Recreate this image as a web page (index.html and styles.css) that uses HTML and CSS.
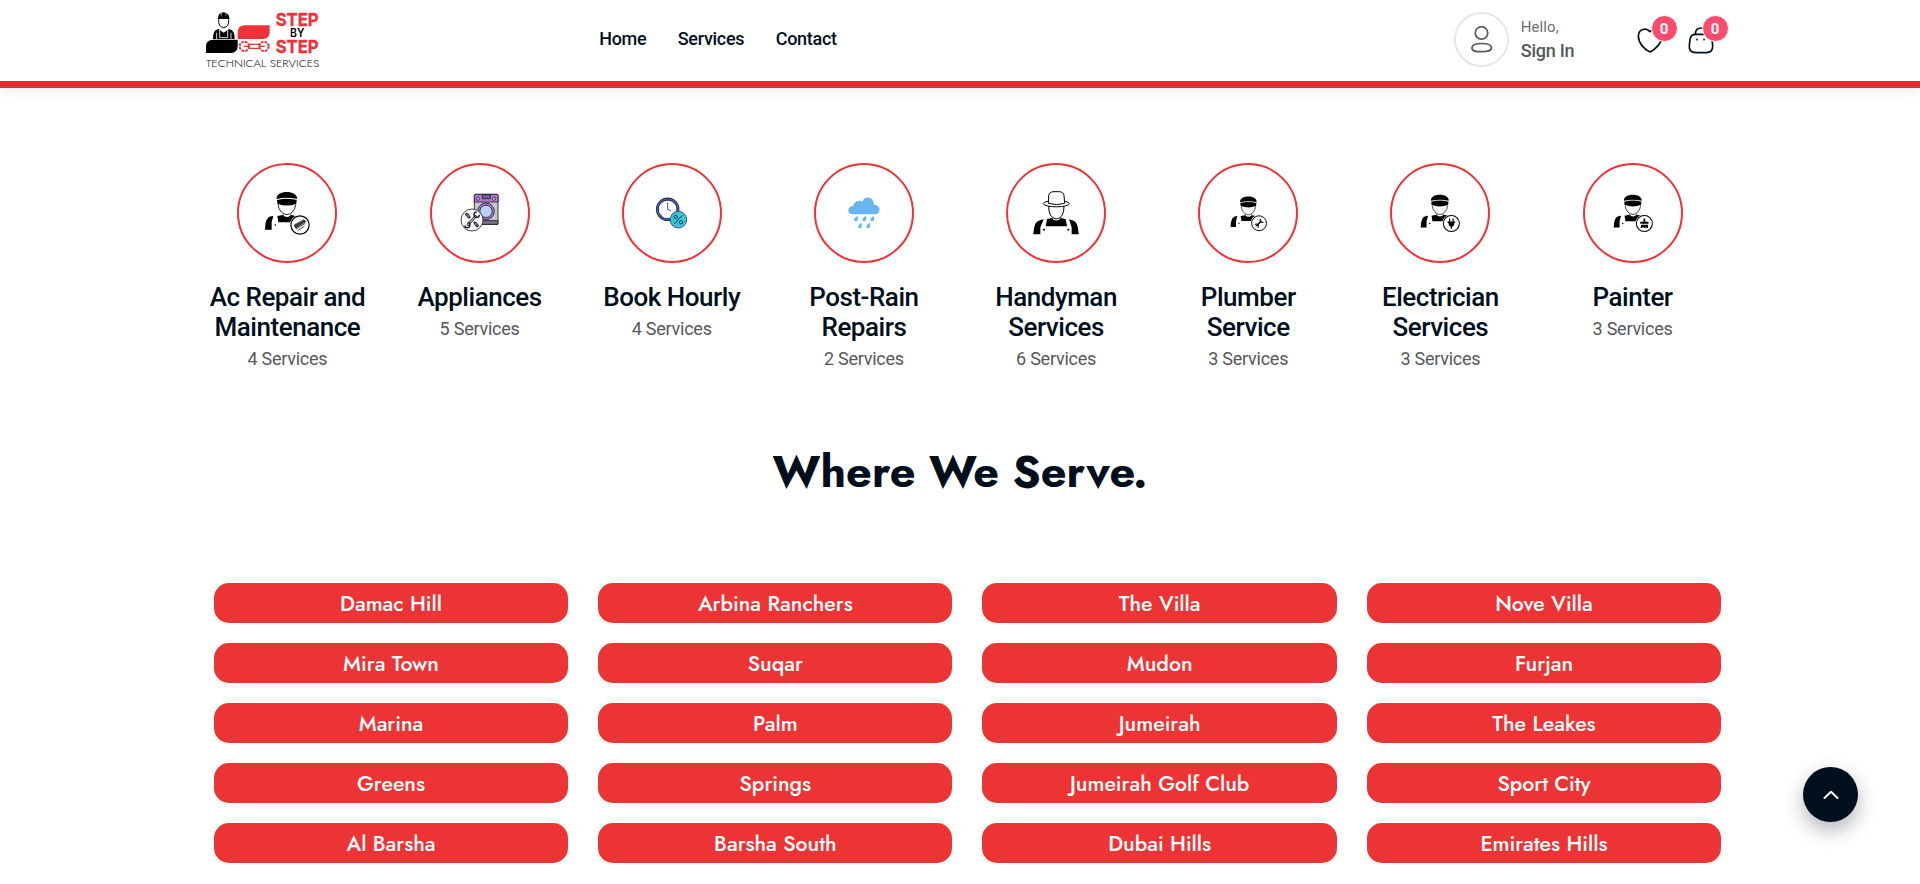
FILE: index.html
```html
<!DOCTYPE html>
<html lang="en">
<head>
<meta charset="utf-8">
<title>Step By Step Technical Services</title>
<link rel="stylesheet" href="styles.css">
</head>
<body>
<svg class="defs" aria-hidden="true">
  <symbol id="worker" viewBox="-72 -72 144 144">
    <path d="M-31-42C-35-70 33-70 30-42Q0-49-31-42Z"/>
    <path d="M-30-39Q0-46 29-39L28-28Q0-17-29-28Z"/>
    <path d="M-27-26Q-25-11-17-3Q-8 5 0 5Q8 5 16-3Q25-11 26-26" fill="none" stroke="#000" stroke-width="2.500"/>
    <path d="M-11 2V10M11 2V10" stroke="#000" stroke-width="1.500"/>
    <path d="M-29 9L-13 6Q0 18 13 6L40 12L24 28H-26Z"/>
    <path d="M-66 50Q-66 12-48 10L-41 9L-46 28V50Z"/>
    <circle cx="-35" cy="36" r="2.500"/>
    <circle cx="39" cy="36" r="31" fill="#fff"/>
    <circle cx="39" cy="36" r="27.500" fill="#fff" stroke="#000" stroke-width="3.500"/>
  </symbol>
</svg>

<header class="header">
  <div class="container header-row">
    <a class="logo">
      <svg viewBox="48 33 342 171" width="114" height="57">
        <path d="M84 55Q84 38 101 37Q117 38 118 55L121 57H81Z"/>
        <path d="M94 47V38M108 47V38" stroke="#fff" stroke-width="2"/>
        <path d="M86 58Q84 81 101 83Q118 81 116 58" fill="#fff" stroke="#000" stroke-width="3"/>
        <path d="M69 117Q68 90 85 87L101 98L117 87Q135 90 134 117Z"/>
        <path d="M89 88V113H113V88M80 98V117M123 98V117" fill="none" stroke="#fff" stroke-width="2.500"/>
        <path d="M48 159V140Q48 119 70 119H143V138Q143 159 122 159Z"/>
        <path d="M143 117V98Q143 76 165 76H239V97Q239 117 218 117Z" fill="#ed323a"/>
        <g fill="none" stroke="#e8353b" stroke-width="4">
          <circle cx="163" cy="139" r="14" stroke-width="6" stroke-dasharray="8 3"/>
          <circle cx="222" cy="139" r="14" stroke-width="6" stroke-dasharray="8 3"/>
          <path d="M161 139H179M206 139H224M178 133H207M178 145H207"/>
        </g>
        <g font-family="Inter, 'Liberation Sans', sans-serif" font-weight="700">
          <text x="257" y="77" font-size="54" textLength="129" lengthAdjust="spacingAndGlyphs" fill="#ed323a" stroke="#ed323a">STEP</text>
          <text x="300" y="111" font-size="34" font-weight="600" textLength="43" lengthAdjust="spacingAndGlyphs">BY</text>
          <text x="257" y="158" font-size="54" textLength="129" lengthAdjust="spacingAndGlyphs" fill="#ed323a" stroke="#ed323a">STEP</text>
        </g>
        <text x="48" y="200" font-family="Jost, Inter, sans-serif" font-size="34" font-weight="300" textLength="340" lengthAdjust="spacingAndGlyphs" fill="#222">TECHNICAL SERVICES</text>
      </svg>
    </a>
    <nav class="nav">
      <a>Home</a>
      <a>Services</a>
      <a>Contact</a>
    </nav>
    <div class="account">
      <span class="avatar">
        <svg viewBox="91 76 68 82" width="23" height="27" fill="none" stroke="#55585b" stroke-width="5">
          <circle cx="125" cy="97" r="19"/>
          <path d="M96 143C96 131 108 129 125 129S155 131 155 142S143 154 125 154S96 153 96 143Z"/>
        </svg>
      </span>
      <div class="account-text">
        <span class="hello">Hello,</span>
        <span class="signin">Sign In</span>
      </div>
    </div>
    <div class="actions">
      <a class="action">
        <svg viewBox="592 81 78 81" width="26" height="27" fill="none" stroke="#010f1c" stroke-width="5" stroke-linecap="round" stroke-linejoin="round">
          <path d="M631 156C614 148 596 129 596 108C597 87 619 81 631 95C643 81 666 87 667 108C667 129 647 148 631 156Z"/>
        </svg>
        <span class="badge">0</span>
      </a>
      <a class="action">
        <svg viewBox="746 81 78 81" width="26" height="27" fill="none" stroke="#010f1c" stroke-width="5" stroke-linecap="round" stroke-linejoin="round">
          <path d="M769 103H802Q816 103 818 118L820 137Q821 158 801 158H769Q748 158 750 137L752 118Q754 103 769 103ZM768 101Q769 84 786 84T803 101M773 118V119M794 118V119"/>
        </svg>
        <span class="badge">0</span>
      </a>
    </div>
  </div>
</header>

<main class="container">
  <section class="categories">
    <a class="category">
      <span class="ring"><svg width="48" height="48" viewBox="-72 -72 144 144"><use href="#worker" x="-72" y="-72" width="144" height="144"/>
        <path d="M22 36L51 20L56 26L26 45ZM27 48L55 31M32 53L52 40" fill="#222" stroke="#222" stroke-width="2.500"/><path d="M25 36L50 22M27 41L53 26" stroke="#bbb"/></svg></span>
      <h3>Ac Repair and Maintenance</h3>
      <p>4 Services</p>
    </a>
    <a class="category">
      <span class="ring"><svg width="48" height="48" viewBox="768 117 144 144" stroke="#1f1d2b" stroke-width="2.500">
        <rect x="823" y="133" width="71" height="90" rx="3" fill="#c8c7d0"/>
        <path d="M823 156V136Q823 133 826 133H891Q894 133 894 136V156Z" fill="#b579cf"/>
        <path d="M847 134H871V146H847Z" fill="#75608d"/>
        <circle cx="834" cy="146" r="4.500" fill="#ead1f3"/><circle cx="882" cy="146" r="4.500" fill="#ead1f3"/>
        <path d="M840 212H894V223H840Z" fill="#777584"/>
        <circle cx="858" cy="184" r="25" fill="#b07acc"/><circle cx="858" cy="184" r="18.500" fill="#b9d3fa"/>
        <circle cx="816" cy="210" r="33" fill="#f8f8fb"/>
        <g fill="none" stroke-width="9" stroke-linecap="round"><path d="M800 193L807 201M825 219L832 227"/></g>
        <path d="M802 226L829 197" stroke-width="7"/><path d="M803 225L828 198" stroke="#fff" stroke-width="3"/>
        <g fill="none" stroke-width="4"><path d="M830 186A8 8 0 1 0 838 194M803 217A8 8 0 1 1 794 226"/></g>
        <path d="M800 193L807 201M825 219L832 227" stroke="#858397" stroke-width="4"/></svg></span>
      <h3>Appliances</h3>
      <p>5 Services</p>
    </a>
    <a class="category">
      <span class="ring"><svg width="48" height="48" viewBox="174 117 144 144" fill="none">
        <circle cx="233" cy="178" r="31" fill="#fff" stroke="#202b4c" stroke-width="8.500"/>
        <circle cx="233" cy="178" r="31" stroke="#4964ae" stroke-width="3.500"/>
        <path d="M233 157V178L243 182M233 149V153M233 203V207M204 178H208M258 178H262M213 158L215 160M253 158L251 160M213 198L215 196" stroke="#26324d" stroke-width="2.500"/>
        <circle cx="265" cy="209" r="25" fill="#3cc6db" stroke="#233f50" stroke-width="2.500"/>
        <g stroke="#173c49" stroke-width="3"><path d="M253 222L277 196"/><circle cx="257" cy="201" r="5"/><circle cx="273" cy="217" r="5"/></g></svg></span>
      <h3>Book Hourly</h3>
      <p>4 Services</p>
    </a>
    <a class="category">
      <span class="ring"><svg width="48" height="48" viewBox="750 117 144 144" fill="#67b6f0">
        <path d="M789 193C770 193 770 169 790 167C793 153 807 149 817 155C824 136 850 139 852 164C875 165 873 192 855 193Z"/>
        <path id="drop" d="M803 198Q806 214 797 214C789 213 791 203 803 198Z"/><use href="#drop" x="25"/><use href="#drop" x="49"/><use href="#drop" x="12" y="21"/><use href="#drop" x="37" y="21"/></svg></span>
      <h3>Post-Rain Repairs</h3>
      <p>2 Services</p>
    </a>
    <a class="category">
      <span class="ring"><svg width="48" height="48" viewBox="156 117 144 144">
        <g fill="#fff" stroke="#000" stroke-width="3">
          <path d="M206 166Q205 204 229 207Q253 204 252 166"/>
          <path d="M217 203V209M241 203V209" stroke-width="2"/>
          <ellipse cx="229" cy="161" rx="39" ry="9.500"/>
          <path d="M205 160L206 137Q207 125 222 125H236Q251 125 252 137L254 160Q229 168 205 160Z"/>
        </g>
        <path d="M201 208L214 204Q229 219 244 204L257 208L261 229H197Z"/>
        <path d="M160 253Q161 213 180 211L191 208L181 232V253ZM296 253Q295 213 277 211L267 208L275 232V253Z"/>
        <circle cx="192" cy="239" r="3"/><circle cx="265" cy="239" r="3"/></svg></span>
      <h3>Handyman Services</h3>
      <p>6 Services</p>
    </a>
    <a class="category">
      <span class="ring"><svg width="39" height="39" viewBox="-72 -72 144 144"><use href="#worker" x="-72" y="-72" width="144" height="144"/>
        <path d="M29 46L48 27" stroke="#000" stroke-width="5.500"/><path d="M45 20A7 7 0 1 0 55 31M24 41A7 7 0 1 1 34 52" fill="none" stroke="#000" stroke-width="4"/></svg></span>
      <h3>Plumber Service</h3>
      <p>3 Services</p>
    </a>
    <a class="category">
      <span class="ring"><svg width="42" height="42" viewBox="-72 -72 144 144"><use href="#worker" x="-72" y="-72" width="144" height="144"/>
        <path d="M33 19V31M45 19V31M39 44V54" stroke="#000" stroke-width="4"/><path d="M26 29H52V34H49Q49 46 39 47Q29 46 29 34H26Z"/></svg></span>
      <h3>Electrician Services</h3>
      <p>3 Services</p>
    </a>
    <a class="category">
      <span class="ring"><svg width="42" height="42" viewBox="-72 -72 144 144"><use href="#worker" x="-72" y="-72" width="144" height="144"/>
        <path d="M36 19H42V30H53V37H25V30H36ZM28 40H51L52 51H46V47L42 51H37L34 47L31 51H26Z"/></svg></span>
      <h3>Painter</h3>
      <p>3 Services</p>
    </a>
  </section>

  <h2 class="section-title">Where We Serve.</h2>

  <section class="areas">
    <a>Damac Hill</a><a>Arbina Ranchers</a><a>The Villa</a><a>Nove Villa</a>
    <a>Mira Town</a><a>Suqar</a><a>Mudon</a><a>Furjan</a>
    <a>Marina</a><a>Palm</a><a>Jumeirah</a><a>The Leakes</a>
    <a>Greens</a><a>Springs</a><a>Jumeirah Golf Club</a><a>Sport City</a>
    <a>Al Barsha</a><a>Barsha South</a><a>Dubai Hills</a><a>Emirates Hills</a>
  </section>
</main>

<button class="to-top" aria-label="Back to top">
  <svg width="16" height="10" viewBox="0 0 16 10" fill="none" stroke="#fff" stroke-width="2" stroke-linecap="round" stroke-linejoin="round"><path d="M1.500 8L8 1.800L14.500 8"/></svg>
</button>
</body>
</html>
```

FILE: styles.css
```css
* {
  box-sizing: border-box;
}

html {
  overflow: hidden;
}

body {
  margin: 0;
  height: 884px;
  overflow: hidden;
  background: #fff;
  color: #010f1c;
  font-family: Roboto, sans-serif;
}

.defs {
  display: block;
  width: 0;
  height: 0;
}

.container {
  width: 1507.3px;
  margin: 0 auto;
}

.header {
  height: 88px;
  background: #fff;
  border-bottom: 7px solid #df3030;
  box-shadow: 0 1px 12px rgba(1, 15, 28, 0.1);
}

.header-row {
  display: flex;
  height: 81px;
}

.logo {
  width: 393px;
  padding-top: 11px;
}

.logo svg {
  display: block;
  overflow: visible;
}

.nav {
  display: flex;
  gap: 31.5px;
  width: 855px;
  padding-top: 28px;
  font-size: 18px;
  font-weight: 500;
  line-height: 22px;
  letter-spacing: -0.3px;
}

.account {
  display: flex;
  gap: 12px;
  width: 180px;
  padding-top: 12px;
}

.avatar {
  display: flex;
  align-items: center;
  justify-content: center;
  width: 55px;
  height: 55px;
  border: 2px solid #e6e7e8;
  border-radius: 50%;
}

.account-text {
  display: flex;
  flex-direction: column;
  color: #55585b;
}

.hello {
  padding-top: 7px;
  font-size: 15px;
  line-height: 16px;
  letter-spacing: 0.1px;
  color: #6b6e71;
}

.signin {
  padding-top: 6px;
  font-size: 18px;
  font-weight: 500;
  line-height: 20px;
  letter-spacing: -0.25px;
}

.actions {
  display: flex;
  gap: 25px;
  padding: 27px 0 0 3px;
}

.action {
  position: relative;
  width: 26px;
  height: 27px;
}

.action svg {
  display: block;
}

.badge {
  position: absolute;
  top: -12px;
  left: 14px;
  width: 27px;
  height: 27px;
  border: 1px solid #fff;
  border-radius: 50%;
  background: #fd4b6b;
  color: #fff;
  font-size: 15px;
  font-weight: 700;
  line-height: 26px;
  text-align: center;
}

.categories {
  display: grid;
  grid-template-columns: repeat(8, 1fr);
  column-gap: 30px;
  height: 354px;
  padding-top: 75px;
}

.category {
  display: flex;
  flex-direction: column;
  align-items: center;
  text-align: center;
}

.ring {
  display: flex;
  align-items: center;
  justify-content: center;
  width: 100px;
  height: 100px;
  border: 2px solid #ee3338;
  border-radius: 50%;
}

.category h3 {
  margin: 19px -5px 0;
  font-size: 26px;
  font-weight: 500;
  line-height: 30px;
  letter-spacing: -0.47px;
}

.category p {
  margin: 5px 0 0;
  color: #55585b;
  font-size: 18px;
  line-height: 24px;
  letter-spacing: -0.25px;
}

.section-title {
  margin: 0;
  height: 141px;
  font-family: Jost, Lato, sans-serif;
  font-size: 45px;
  font-weight: 700;
  line-height: 60px;
  text-align: center;
}

.areas {
  display: grid;
  grid-template-columns: repeat(4, 1fr);
  gap: 20px 30px;
  margin: 0 -7.5px 0 7.5px;
}

.areas a {
  height: 40px;
  border-radius: 15px;
  background: #ed3434;
  color: #fff;
  font-family: Jost, Lato, sans-serif;
  font-size: 21.3px;
  font-weight: 500;
  line-height: 41px;
  text-align: center;
}

.to-top {
  position: fixed;
  right: 62px;
  bottom: 62px;
  display: flex;
  align-items: center;
  justify-content: center;
  width: 55px;
  height: 55px;
  padding: 0;
  border: 0;
  border-radius: 50%;
  background: #010f1c;
  box-shadow: 0 8px 20px rgba(3, 4, 28, 0.3);
}
```
